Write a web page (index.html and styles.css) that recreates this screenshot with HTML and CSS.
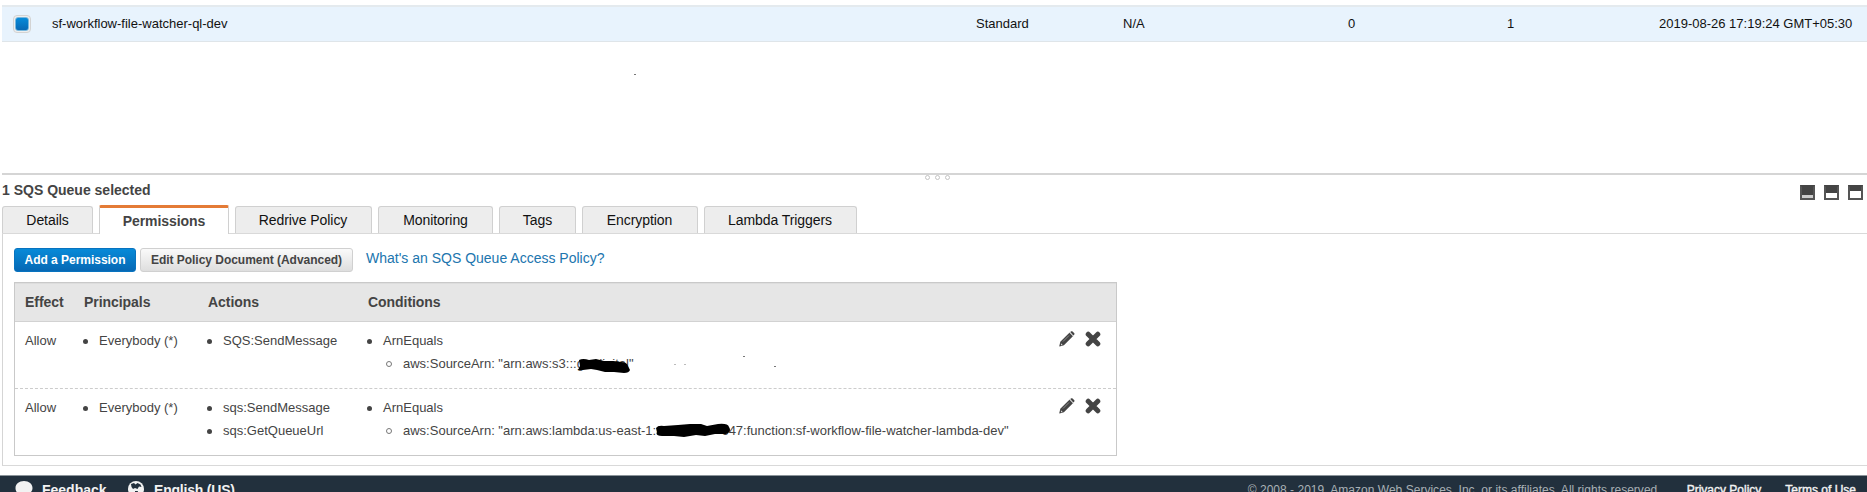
FILE: index.html
```html
<!DOCTYPE html>
<html lang="en">
<head>
<meta charset="utf-8">
<title>SQS Queues</title>
<link rel="stylesheet" href="styles.css">
</head>
<body>
<svg class="defs" width="0" height="0">
  <symbol id="pencil" viewBox="0 0 16 16"><path d="M11.200 1 12.400.3Q13 0 13.600.5L15.300 2.200Q15.900 2.900 15.300 3.500L14.300 4.600Z" fill="#444"/><path d="M10.400 1.700 13.900 5.300 4.900 14.300.6 15.500Q.2 15.400.3 15L1.300 10.700Z" fill="#444"/><path d="M4 10.500 10 4.500" stroke="#999" stroke-width=".8"/><path d="M10.500 1.500 14.200 5" stroke="#aaa" stroke-width=".6"/><path d="M1.900 12.200 3.700 13.900 2 14.300Z" fill="#ddd"/></symbol>
  <symbol id="cross" viewBox="0 0 16 16"><path d="M3.200 3.200 12.800 12.800M12.800 3.200 3.200 12.800" stroke="#444" stroke-width="5" stroke-linecap="round"/></symbol>
</svg>
<main class="page">
  <section class="queue-row">
    <span class="check"><i></i></span>
    <span class="name">sf-workflow-file-watcher-ql-dev</span>
    <span class="type">Standard</span>
    <span class="dedupe">N/A</span>
    <span class="count">0</span>
    <span class="flight">1</span>
    <span class="created">2019-08-26 17:19:24 GMT+05:30</span>
  </section>
  <div class="blank"><i class="speck speck-a"></i></div>
  <section class="split">
    <div class="grip"><i></i><i></i><i></i></div>
    <h2>1 SQS Queue selected</h2>
    <div class="sizes"><span class="size low"></span><span class="size mid"></span><span class="size high"></span></div>
  </section>
  <nav class="tabs">
    <a class="tab details">Details</a>
    <a class="tab permissions active">Permissions</a>
    <a class="tab redrive">Redrive Policy</a>
    <a class="tab monitoring">Monitoring</a>
    <a class="tab tags">Tags</a>
    <a class="tab encryption">Encryption</a>
    <a class="tab lambda">Lambda Triggers</a>
  </nav>
  <section class="panel">
    <div class="toolbar">
      <button class="btn primary">Add a Permission</button>
      <button class="btn plain">Edit Policy Document (Advanced)</button>
      <a class="help">What's an SQS Queue Access Policy?</a>
    </div>
    <div class="table">
      <div class="row head"><b>Effect</b><b>Principals</b><b>Actions</b><b>Conditions</b></div>
      <div class="row">
        <div>Allow</div>
        <ul><li>Everybody (*)</li></ul>
        <ul><li>SQS:SendMessage</li></ul>
        <ul><li>ArnEquals</li><li class="sub">aws:SourceArn: "arn:aws:s3:::g<span class="redact bucket"><svg width="56" height="18" viewBox="0 0 56 18"><path d="M3 3Q7 1 13 3L20 2 28 4 37 4 45 5Q51 5 52 9L54 13Q53 16 48 16L38 15 29 15 21 13 15 12 7 13 2 13 4 9Z"/></svg></span>digital"</li></ul>
        <div class="actions"><svg><use href="#pencil"/></svg><svg><use href="#cross"/></svg></div>
        <i class="speck speck-b"></i><i class="speck speck-c"></i><i class="speck speck-d"></i><i class="speck speck-e"></i>
      </div>
      <div class="row">
        <div>Allow</div>
        <ul><li>Everybody (*)</li></ul>
        <ul><li>sqs:SendMessage</li><li>sqs:GetQueueUrl</li></ul>
        <ul><li>ArnEquals</li><li class="sub">aws:SourceArn: "arn:aws:lambda:us-east-1:6<span class="redact account"><svg width="78" height="16" viewBox="0 0 78 16"><path d="M3 5Q5 2 11 3L25 2 37 1 48 1 54 3 65 1Q75 0 76 4 79 9 73 11L62 11 52 13 43 12 31 14 21 13 9 13Q2 13 4 9Z"/></svg></span>647:function:sf-workflow-file-watcher-lambda-dev"</li></ul>
        <div class="actions"><svg><use href="#pencil"/></svg><svg><use href="#cross"/></svg></div>
      </div>
    </div>
  </section>
  <footer class="footer">
    <svg class="bubble" viewBox="0 0 18 18"><path d="M9 1C4 1 .5 4 .5 8s3 6 4 6.500L3 18l5-3c6 0 9.500-3 9.500-7S14 1 9 1Z" fill="#f2f2f2"/></svg>
    <span class="feedback">Feedback</span>
    <svg class="globe" viewBox="0 0 16 16"><circle cx="8" cy="8" r="8" fill="#f2f2f2"/><path d="M3 3 6 2 7.500 3.500 9.500 2 12.500 3.500 13.500 6 11 5.500 9.500 8 7 7 5 8 3.500 6ZM7 10 10 10 9 14 7 13Z" fill="#22303d"/></svg>
    <span class="language">English (US)</span>
    <span class="copyright">© 2008 - 2019, Amazon Web Services, Inc. or its affiliates. All rights reserved.</span>
    <span class="legal privacy">Privacy Policy</span>
    <span class="legal">Terms of Use</span>
  </footer>
</main>
</body>
</html>
```
FILE: styles.css
```css
*, *::before, *::after { box-sizing: border-box; }
html, body { margin: 0; height: 100%; overflow: hidden; }
body { font: 13px/23px "Liberation Sans", Arial, sans-serif; color: #444; background: #fff; }
.defs { position: absolute; }
.page { height: 492px; padding-top: 5px; overflow: hidden; display: flex; flex-direction: column; }
.page > * { flex-shrink: 0; }

.queue-row {
  height: 37px; margin-left: 2px; padding-bottom: 2px; display: grid; align-items: center; color: #111;
  grid-template-columns: 50px 924px 147px 225px 159px 152px 1fr;
  background: #e8f3fd; border-top: 2px solid #e4eaee; border-bottom: 1px solid #dfe5e9;
}
.check { width: 18px; height: 18px; margin: 1px 0 0 11px; padding: 1px; border: 1px solid #d3d3d3; border-radius: 4px; background: #eee; }
.check i { display: block; height: 14px; border: 1px solid #78b8de; border-radius: 3px; background: linear-gradient(#078bd9, #0869b5); }
.blank { height: 131px; position: relative; }

.split { height: 32px; margin-left: 2px; border-top: 2px solid #d5d5d5; position: relative; display: flex; justify-content: space-between; }
.split h2 { margin: 4px 0 0; font-size: 14px; line-height: 23px; }
.grip { position: absolute; left: 923px; top: 0; display: flex; gap: 5px; }
.grip i { width: 5px; height: 5px; border: 1px solid #c4c4c4; border-radius: 50%; }
.sizes { display: flex; gap: 9px; margin: 10px 4px 0 0; }
.size { width: 15px; height: 15px; border: 2px solid #555; border-top-color: #444; background: #444; padding-top: 8px; }
.size::after { content: ""; display: block; height: 3px; background: #ccc; }
.size.mid { padding-top: 6px; }
.size.mid::after { height: 5px; background: #fff; }
.size.high { padding-top: 4px; }
.size.high::after { height: 7px; background: #fff; }

.tabs { height: 29px; margin-left: 2px; display: flex; align-items: flex-end; gap: 6px; border-bottom: 1px solid #d9d9d9; }
.tab { height: 27px; border: 1px solid #d0d0d0; border-bottom: 0; border-radius: 3px 3px 0 0; background: #ededed; color: #111; font-size: 14px; line-height: 27px; letter-spacing: -.07px; text-align: center; }
.tab.active { height: 29px; margin-bottom: -1px; border-top: 3px solid #e47b36; border-radius: 2px 2px 0 0; background: #fff; color: #444; font-weight: bold; }
.details { width: 91px; }
.permissions { width: 130px; }
.redrive { width: 137px; padding-right: 1px; }
.monitoring { width: 115px; }
.tags { width: 77px; }
.encryption { width: 116px; padding-right: 1px; }
.lambda { width: 153px; padding-right: 1px; }

.panel { height: 232px; margin-left: 2px; padding: 14px 0 0 11px; border-left: 1px solid #d5d5d5; border-bottom: 1px solid #d9d9d9; }
.toolbar { display: flex; height: 24px; }
.btn { height: 24px; padding: 0 0 1px; border: 1px solid #d0d0d0; border-radius: 3px; font: bold 12px/20px "Liberation Sans", Arial, sans-serif; letter-spacing: -.03px; white-space: nowrap; }
.primary { width: 122px; margin-right: 4px; color: #fff; border-color: #0873bf; background: linear-gradient(#078ad8, #0668b4); }
.plain { width: 213px; margin-right: 13px; color: #444; background: linear-gradient(#fafafa, #dedede); }
.help { color: #2075ae; font-size: 14px; line-height: 21px; }

.table { width: 1103px; height: 174px; margin-top: 10px; border: 1px solid #c9c9c9; }
.row { position: relative; display: grid; grid-template-columns: 59px 124px 160px 691px 1fr; height: 66px; padding: 7px 0 0 10px; }
.row + .row + .row { height: 67px; border-top: 1px dashed #ccc; }
.row.head { height: 39px; padding-top: 7px; background: #e6e6e6; border-top: 1px solid #ddd; border-bottom: 1px solid #d2d2d2; font-size: 14px; letter-spacing: -.05px; }
.row ul { margin: 0; padding: 0; list-style: none; white-space: nowrap; }
.row li { position: relative; padding-left: 15px; }
.row li::before { content: ""; position: absolute; left: -1px; top: 10px; width: 5px; height: 5px; border-radius: 50%; background: #444; }
.row li.sub { padding-left: 35px; }
.row li.sub::before { left: 18px; top: 9px; width: 6px; height: 6px; border: 1px solid #777; background: none; }
.actions { display: flex; gap: 10px; padding-top: 2px; }
.actions svg { width: 16px; height: 16px; fill: none; }
.redact { position: relative; display: inline-block; height: 1px; }
.redact svg { position: absolute; z-index: 1; fill: #000; }
.bucket { width: 11px; }
.bucket svg { left: -8px; top: -10px; }
.account { width: 58px; }
.account svg { left: -10px; top: -11px; }
.speck { position: absolute; width: 2px; height: 1px; background: #777; }
.speck-a { left: 634px; top: 32px; }
.speck-b { left: 728px; top: 34px; }
.speck-c { left: 759px; top: 44px; }
.speck-d { left: 659px; top: 42px; opacity: .5; }
.speck-e { left: 669px; top: 42px; opacity: .5; }

.footer { height: 30px; margin-top: 9px; padding: 4px 11px 0 15px; display: flex; background: #22303d; border-top: 1px solid #8b949a; color: #f2f2f2; font-weight: bold; font-size: 14px; line-height: 20px; white-space: nowrap; }
.bubble { width: 18px; height: 18px; margin-right: 9px; }
.feedback { width: 86px; }
.globe { width: 16px; height: 16px; margin: 1px 10px 0 0; }
.language { letter-spacing: -.2px; }
.copyright { margin-left: auto; margin-right: 26px; font-weight: normal; font-size: 12px; letter-spacing: .02px; color: #a9b1b5; }
.legal { font-weight: normal; font-size: 12px; -webkit-text-stroke: .4px #f2f2f2; }
.privacy { margin-right: 24px; }
```
